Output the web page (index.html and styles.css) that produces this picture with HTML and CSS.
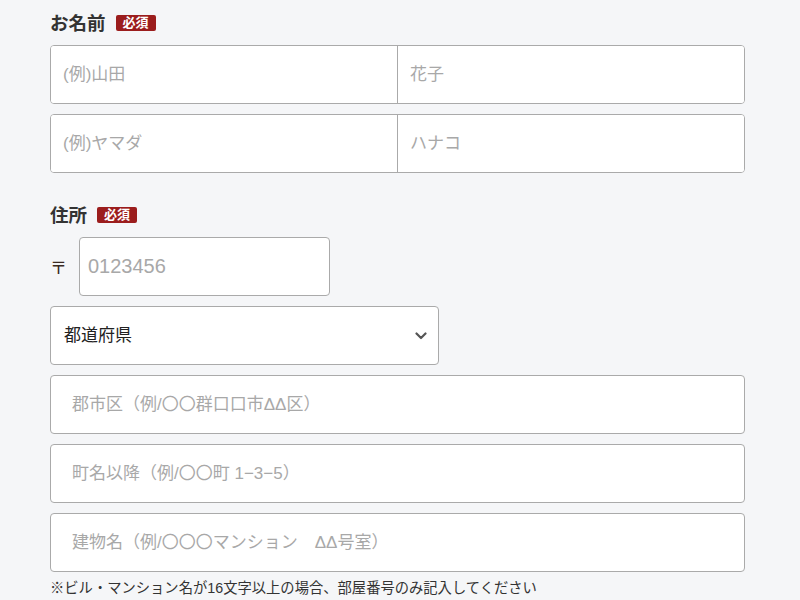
FILE: index.html
```html
<!DOCTYPE html>
<html lang="ja">
<head>
<meta charset="utf-8">
<link rel="stylesheet" href="styles.css">
</head>
<body>
<form class="form">
  <div class="label first"><span>お名前</span><span class="badge">必須</span></div>
  <div class="pair">
    <input class="pair-input left" type="text" placeholder="(例)山田">
    <input class="pair-input" type="text" placeholder="花子">
  </div>
  <div class="pair">
    <input class="pair-input left" type="text" placeholder="(例)ヤマダ">
    <input class="pair-input" type="text" placeholder="ハナコ">
  </div>

  <div class="label second"><span>住所</span><span class="badge">必須</span></div>
  <div class="postal">
    <span class="postal-mark">〒</span>
    <input class="field postal-input" type="text" placeholder="0123456">
  </div>
  <div class="select-wrap">
    <select class="field select">
      <option>都道府県</option>
    </select>
    <svg class="chevron" width="12" height="8" viewBox="0 0 12 8"><path d="M1.5 1.5 L6 6 L10.5 1.5" fill="none" stroke="#555" stroke-width="2.2" stroke-linecap="round" stroke-linejoin="round"/></svg>
  </div>
  <input class="field wide" type="text" placeholder="郡市区（例/〇〇群口口市ΔΔ区）">
  <input class="field wide" type="text" placeholder="町名以降（例/〇〇町 1−3−5）">
  <input class="field wide" type="text" placeholder="建物名（例/〇〇〇マンション　ΔΔ号室）">
  <p class="note">※ビル・マンション名が16文字以上の場合、部屋番号のみ記入してください</p>
</form>
</body>
</html>
```

FILE: styles.css
```css
*, *::before, *::after {
  box-sizing: border-box;
}
html, body {
  margin: 0;
  padding: 0;
  background: #f5f6f8;
}
body {
  font-family: "Liberation Sans", "Noto Sans CJK JP", sans-serif;
  color: #333;
}
.form {
  width: 745px;
  padding: 0 0 0 50px;
  display: flex;
  flex-direction: column;
}
.label {
  display: flex;
  align-items: center;
  gap: 10px;
  height: 24px;
  font-size: 18.5px;
  font-weight: bold;
  color: #333;
  margin-bottom: 11px;
}
.label.first { margin-top: 10px; }
.label.second { margin-top: 19px; }
.badge {
  display: inline-block;
  background: #9b1d1d;
  color: #fff;
  font-size: 13px;
  font-weight: bold;
  line-height: 16px;
  padding: 0 7px;
  border-radius: 2px;
  margin-top: 2px;
}
.pair {
  display: flex;
  height: 59px;
  border: 1px solid #aaa;
  border-radius: 4px;
  background: #fff;
  overflow: hidden;
  margin-bottom: 10px;
}
.pair-input {
  flex: 1;
  min-width: 0;
  border: none;
  outline: none;
  background: #fff;
  padding: 0 0 0 12px;
  font-family: inherit;
  font-size: 17px;
  color: #222;
}
.pair-input.left {
  border-right: 1px solid #aaa;
  flex: 0 0 347px;
}
input::placeholder {
  color: #a8a8a8;
  opacity: 1;
}
.field {
  height: 59px;
  border: 1px solid #aaa;
  border-radius: 4px;
  background: #fff;
  outline: none;
  font-family: inherit;
  font-size: 17px;
  color: #222;
  margin: 0 0 10px 0;
}
.postal {
  display: flex;
  align-items: center;
  gap: 12px;
}
.postal-mark {
  font-size: 17px;
  color: #3a2a22;
  margin-bottom: 10px;
}
.postal-input {
  width: 251px;
  padding: 0 0 0 8px;
  font-size: 20px;
}
.select-wrap {
  position: relative;
  width: 389px;
}
.select {
  width: 389px;
  appearance: none;
  -webkit-appearance: none;
  padding: 0 0 0 13px;
  color: #222;
}
.chevron {
  position: absolute;
  left: 365px;
  top: 26px;
}
.wide {
  width: 695px;
  padding: 0 0 0 21px;
}
.note {
  margin: -4px 0 0 0;
  font-size: 14.3px;
  line-height: 20px;
  color: #333;
}
```
